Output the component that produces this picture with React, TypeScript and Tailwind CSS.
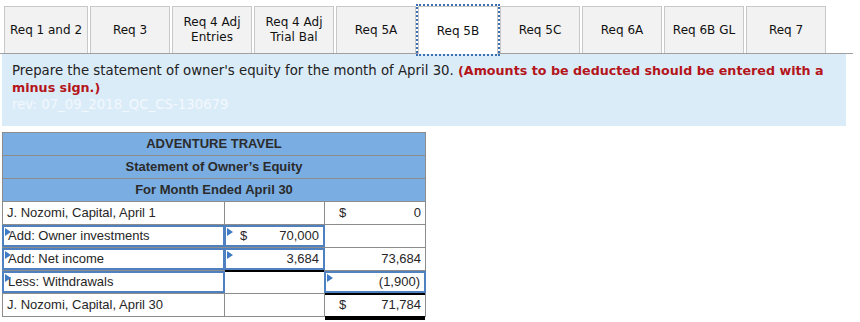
import React from "react";

type Tab = { lines: string[]; w: string; active?: boolean };

const tabs: Tab[] = [
  { lines: ["Req 1 and 2"], w: "w-[84px]" },
  { lines: ["Req 3"], w: "w-[80px]" },
  { lines: ["Req 4 Adj", "Entries"], w: "w-[80px]" },
  { lines: ["Req 4 Adj", "Trial Bal"], w: "w-[80px]" },
  { lines: ["Req 5A"], w: "w-[80px]" },
  { lines: ["Req 5B"], w: "w-[80px]", active: true },
  { lines: ["Req 5C"], w: "w-[80px]" },
  { lines: ["Req 6A"], w: "w-[80px]" },
  { lines: ["Req 6B GL"], w: "w-[80px]" },
  { lines: ["Req 7"], w: "w-[80px]" },
];

const Tri = () => (
  <span className="absolute left-[1px] top-[1px] w-0 h-0 border-y-[4px] border-y-transparent border-l-[6px] border-l-[#3f7ac4]" />
);

type CellProps = {
  input?: boolean;
  dollar?: boolean;
  value?: string;
  left?: string;
  topBlack?: boolean;
  doubleBottom?: boolean;
};

function Cell({ input, dollar, value, left, topBlack, doubleBottom }: CellProps) {
  const inner = (
    <div className="flex items-center h-full px-[4px] justify-between">
      {left !== undefined ? (
        <span>{left}</span>
      ) : (
        <>
          <span className="pl-[10px]">{dollar ? "$" : ""}</span>
          <span>{value ?? ""}</span>
        </>
      )}
    </div>
  );
  return (
    <td className="border border-[#8c8c8c] p-0 h-[22px] relative align-middle">
      {topBlack && <span className="absolute left-0 right-0 top-[-1px] h-[2px] bg-black" />}
      {doubleBottom && (
        <span className="absolute left-0 right-0 bottom-[-4px] h-[4px] border-y-2 border-black" />
      )}
      {input ? (
        <div className="relative h-[22px] border-2 border-[#4f80bf] -m-px">
          <Tri />
          {inner}
        </div>
      ) : (
        <div className="h-[22px]">{inner}</div>
      )}
    </td>
  );
}

export default function App() {
  return (
    <div
      className="w-[860px] h-[322px] bg-white overflow-hidden"
      style={{ fontFamily: '"DejaVu Sans", Verdana, sans-serif' }}
    >
      <div className="w-[853px] border-b border-[#a0a0a0] pt-[6px] pl-[4px] flex gap-[2px] h-[54px]">
        {tabs.map((t, i) =>
          t.active ? (
            <div
              key={i}
              className={`${t.w} h-[48px] bg-white border border-b-0 border-[#c8c8c8] outline-2 outline-dotted outline-[#3a6fb5] flex flex-col items-center justify-center text-[12px] leading-[16px] text-[#111] relative z-10`}
            >
              {t.lines.map((l) => (
                <span key={l}>{l}</span>
              ))}
            </div>
          ) : (
            <div
              key={i}
              className={`${t.w} h-[47px] bg-[#f2f2f2] border border-b-0 border-[#c8c8c8] flex flex-col items-center justify-center text-[12px] leading-[15px] text-[#111]`}
            >
              {t.lines.map((l) => (
                <span key={l}>{l}</span>
              ))}
            </div>
          )
        )}
      </div>
      <div className="ml-[2px] w-[844px] h-[72px] bg-[#dbecf9] pl-[10px] pt-[9px] text-[13.3px] leading-[16.5px] text-[#222] whitespace-nowrap">
        Prepare the statement of owner's equity for the month of April 30.{" "}
        <span className="font-bold text-[#b4151b] text-[12.7px]">
          (Amounts to be deducted should be entered with a
          <br />
          minus sign.)
        </span>
        <div className="text-[#f2f8fd] mt-[1px]">rev: 07_09_2018_QC_CS-130679</div>
      </div>
      <div className="pl-[2px] pt-[6px]">
        <table
          className="border-collapse table-fixed w-[423px] text-[13px] text-[#262626]"
          style={{ fontFamily: '"Liberation Sans", Arial, sans-serif' }}
        >
          <colgroup>
            <col className="w-[222px]" />
            <col className="w-[100px]" />
            <col className="w-[101px]" />
          </colgroup>
          <tbody>
            {["ADVENTURE TRAVEL", "Statement of Owner’s Equity", "For Month Ended April 30"].map((h) => (
              <tr key={h}>
                <td
                  colSpan={3}
                  className="border border-[#8c8c8c] bg-[#7aaee3] h-[23px] text-center font-bold text-[13px] text-[#2b2b2b] p-0"
                >
                  {h}
                </td>
              </tr>
            ))}
            <tr>
              <Cell left="J. Nozomi, Capital, April 1" />
              <Cell />
              <Cell dollar value="0" />
            </tr>
            <tr>
              <Cell input left="Add: Owner investments" />
              <Cell input dollar value="70,000" />
              <Cell />
            </tr>
            <tr>
              <Cell input left="Add: Net income" />
              <Cell input value="3,684" />
              <Cell value="73,684" />
            </tr>
            <tr>
              <Cell input left="Less: Withdrawals" />
              <Cell topBlack />
              <Cell input value="(1,900)" />
            </tr>
            <tr>
              <Cell left="J. Nozomi, Capital, April 30" />
              <Cell />
              <Cell dollar value="71,784" topBlack doubleBottom />
            </tr>
          </tbody>
        </table>
      </div>
    </div>
  );
}
